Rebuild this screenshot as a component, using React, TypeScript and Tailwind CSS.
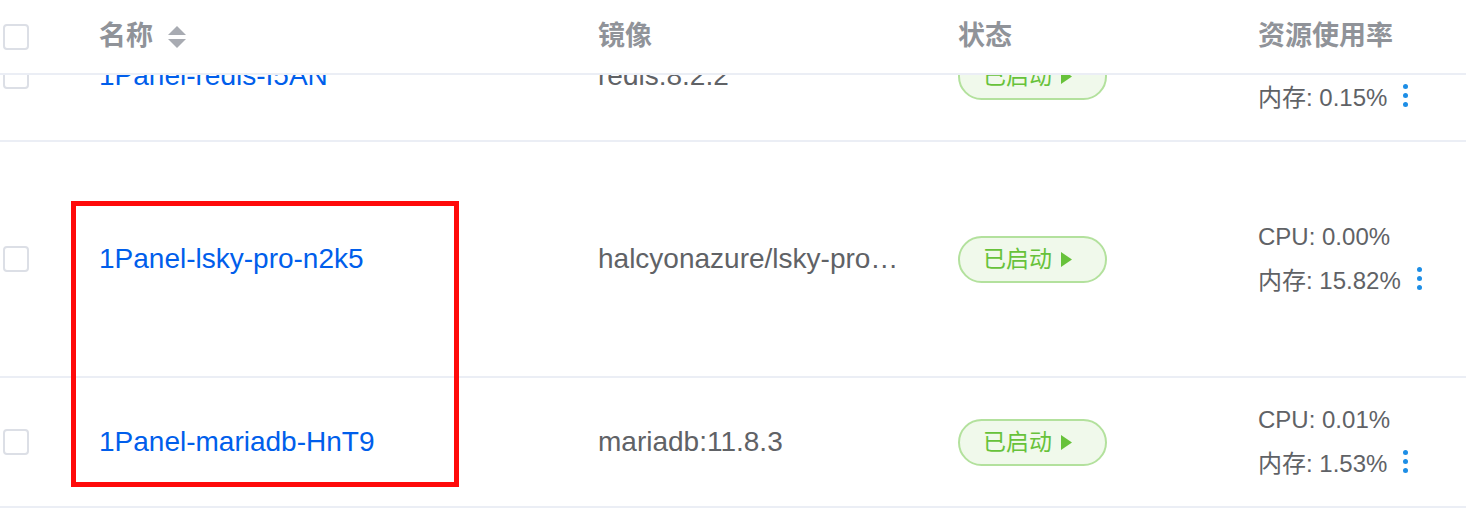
import React from "react";

interface Row {
  id: number;
  name: string;
  image: string;
  cpu: string;
  mem: string;
  height: string;
}

const ROWS: Row[] = [
  { id: 1, name: "1Panel-redis-I5AN", image: "redis:8.2.2", cpu: "0.02%", mem: "0.15%", height: "h-[130px]" },
  { id: 2, name: "1Panel-lsky-pro-n2k5", image: "halcyonazure/lsky-pro-docker:latest", cpu: "0.00%", mem: "15.82%", height: "h-[236px]" },
  { id: 3, name: "1Panel-mariadb-HnT9", image: "mariadb:11.8.3", cpu: "0.01%", mem: "1.53%", height: "h-[130px]" },
];

const COLS = "grid grid-cols-[99px_499px_360px_300px_1fr] items-center";

function Checkbox() {
  return <span className="ml-[3px] block h-[26px] w-[26px] rounded-[4px] border-2 border-[#dcdfe6] bg-white" />;
}

function SortIcon() {
  return (
    <svg width="20" height="24" viewBox="0 0 20 24" className="ml-[14px]">
      <path d="M10 1 L19 10 L1 10 Z" fill="#a8abb2" />
      <path d="M1 14 L19 14 L10 23 Z" fill="#a8abb2" />
    </svg>
  );
}

function StatusTag() {
  return (
    <span className="flex h-[47px] w-[149px] items-center rounded-full border-2 border-[#b3e19d] bg-[#f0f9eb] pl-[23px] text-[23px] text-[#67c23a]">
      已启动
      <svg width="11" height="15" viewBox="0 0 11 15" className="ml-[9px]">
        <path d="M0 0 L11 7.5 L0 15 Z" fill="#67c23a" />
      </svg>
    </span>
  );
}

function Kebab() {
  return (
    <span className="ml-[16px] flex flex-col gap-[4px] pb-[6px]">
      <span className="block h-[5px] w-[5px] rounded-full bg-[#1d8ee6]" />
      <span className="block h-[5px] w-[5px] rounded-full bg-[#1d8ee6]" />
      <span className="block h-[5px] w-[5px] rounded-full bg-[#1d8ee6]" />
    </span>
  );
}

export default function App() {
  return (
    <div
      className="relative h-[530px] w-[1466px] overflow-hidden bg-white"
      style={{ fontFamily: '"Liberation Sans", "Noto Sans CJK SC", sans-serif' }}
    >
      <div className={`${COLS} h-[75px] border-b-2 border-[#ebeef5] text-[27px] font-bold text-[#909399]`}>
        <div>
          <Checkbox />
        </div>
        <div className="flex items-center">
          名称
          <SortIcon />
        </div>
        <div>镜像</div>
        <div>状态</div>
        <div>资源使用率</div>
      </div>

      <div className="h-[455px] overflow-hidden">
        <div className="-mt-[63px]">
          {ROWS.map((r) => (
            <div key={r.id} className={`${COLS} ${r.height} border-b-2 border-[#ebeef5]`}>
              <div>
                <Checkbox />
              </div>
              <div className="text-[28px] text-[#005eeb]">{r.name}</div>
              <div className="w-[304px] truncate text-[28px] text-[#606266]">{r.image}</div>
              <div>
                <StatusTag />
              </div>
              <div className="text-[24px] text-[#606266]">
                <div className="flex h-[44px] items-center">CPU: {r.cpu}</div>
                <div className="flex h-[44px] items-center">
                  内存: {r.mem}
                  <Kebab />
                </div>
              </div>
            </div>
          ))}
        </div>
      </div>

      <div className="pointer-events-none absolute left-[71px] top-[201px] h-[286px] w-[388px] border-[5px] border-[#ff0a0a]" />
    </div>
  );
}
